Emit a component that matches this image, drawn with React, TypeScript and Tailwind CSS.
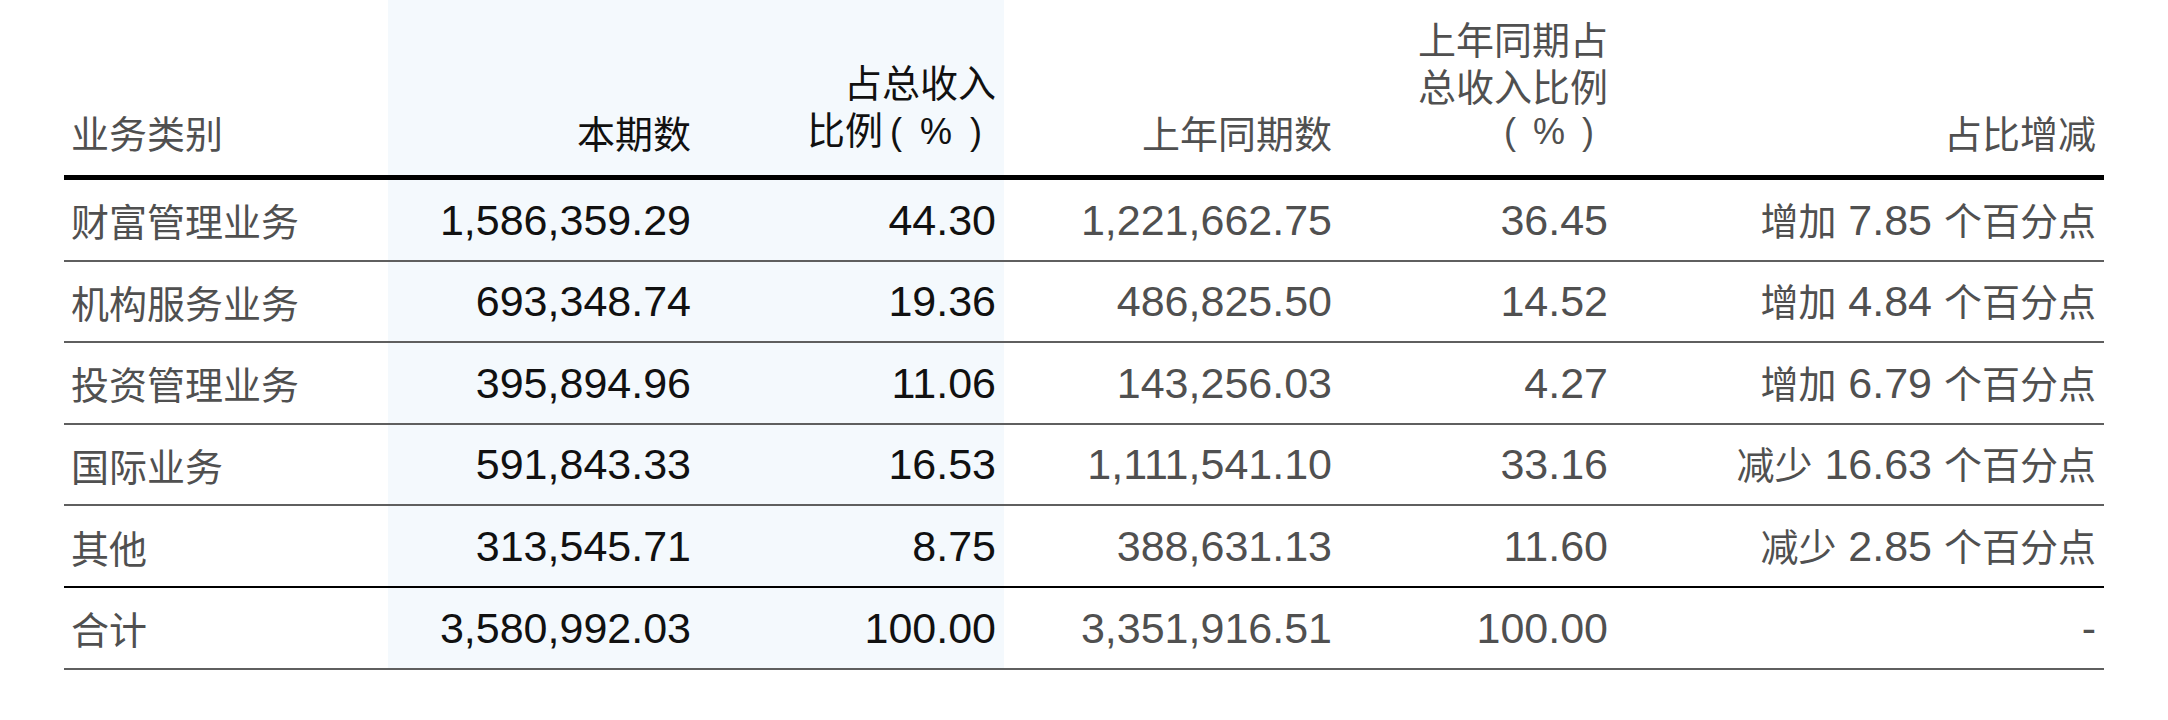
import React from "react";

const CJK = "font-['Noto_Sans_CJK_SC',sans-serif] text-[38px]";
const NUM = "font-['Liberation_Sans','Noto_Sans_CJK_SC',sans-serif] text-[43px]";
const GRAY = "text-[#505050]";
const DARK = "text-[#111111]";
const BAND = "bg-[#f4f9fd]";

type Row = {
  name: string;
  cur: string;
  curPct: string;
  prev: string;
  prevPct: string;
  change: [string, string] | null;
};

const rows: Row[] = [
  { name: "财富管理业务", cur: "1,586,359.29", curPct: "44.30", prev: "1,221,662.75", prevPct: "36.45", change: ["增加", "7.85"] },
  { name: "机构服务业务", cur: "693,348.74", curPct: "19.36", prev: "486,825.50", prevPct: "14.52", change: ["增加", "4.84"] },
  { name: "投资管理业务", cur: "395,894.96", curPct: "11.06", prev: "143,256.03", prevPct: "4.27", change: ["增加", "6.79"] },
  { name: "国际业务", cur: "591,843.33", curPct: "16.53", prev: "1,111,541.10", prevPct: "33.16", change: ["减少", "16.63"] },
  { name: "其他", cur: "313,545.71", curPct: "8.75", prev: "388,631.13", prevPct: "11.60", change: ["减少", "2.85"] },
  { name: "合计", cur: "3,580,992.03", curPct: "100.00", prev: "3,351,916.51", prevPct: "100.00", change: null },
];

function HeadCell({ children, band, dark, left }: { children: React.ReactNode; band?: boolean; dark?: boolean; left?: boolean }) {
  return (
    <div
      className={`h-[180px] border-b-[5px] border-black flex flex-col justify-end pb-[20px] ${left ? "items-start pl-[7px]" : "items-end pr-[8px] text-right"} ${band ? BAND : ""} ${dark ? DARK : GRAY} ${CJK} leading-[47px]`}
    >
      {children}
    </div>
  );
}

function BodyCell({ children, band, dark, left, borderCls }: { children: React.ReactNode; band?: boolean; dark?: boolean; left?: boolean; borderCls: string }) {
  return (
    <div
      className={`h-[81.6px] border-b-2 ${borderCls} flex items-center ${left ? "justify-start pl-[7px]" : "justify-end pr-[8px]"} ${band ? BAND : ""} ${dark ? DARK : GRAY} whitespace-nowrap`}
    >
      {children}
    </div>
  );
}

function Pct({ cls }: { cls: string }) {
  return (
    <span className={`inline-flex justify-between ${cls} font-['Liberation_Sans',sans-serif] text-[36px]`}>
      <span>(</span>
      <span>%</span>
      <span>)</span>
    </span>
  );
}

export default function App() {
  return (
    <div className="w-[2168px] h-[720px] bg-white pl-[64px]">
      <div className="grid grid-cols-[324px_311px_305px_336px_276px_488px] w-[2040px]">
        <HeadCell left>业务类别</HeadCell>
        <HeadCell band dark>本期数</HeadCell>
        <HeadCell band dark>
          <div>占总收入</div>
          <div className="flex items-baseline">
            <span>比例</span>
            <Pct cls="w-[92px] mr-[14px] ml-[7px]" />
          </div>
        </HeadCell>
        <HeadCell>上年同期数</HeadCell>
        <HeadCell>
          <div>上年同期占</div>
          <div>总收入比例</div>
          <div className="flex items-baseline">
            <Pct cls="w-[90px] mr-[14px]" />
          </div>
        </HeadCell>
        <HeadCell>占比增减</HeadCell>

        {rows.map((r, i) => {
          const borderCls = i === 4 ? "border-black" : "border-[#5f5f5f]";
          return (
            <React.Fragment key={r.name}>
              <BodyCell left borderCls={borderCls}>
                <span className={CJK}>{r.name}</span>
              </BodyCell>
              <BodyCell band dark borderCls={borderCls}>
                <span className={NUM}>{r.cur}</span>
              </BodyCell>
              <BodyCell band dark borderCls={borderCls}>
                <span className={NUM}>{r.curPct}</span>
              </BodyCell>
              <BodyCell borderCls={borderCls}>
                <span className={NUM}>{r.prev}</span>
              </BodyCell>
              <BodyCell borderCls={borderCls}>
                <span className={NUM}>{r.prevPct}</span>
              </BodyCell>
              <BodyCell borderCls={borderCls}>
                {r.change ? (
                  <span className="whitespace-pre">
                    <span className={CJK}>{r.change[0]}</span>
                    <span className={NUM}>{` ${r.change[1]} `}</span>
                    <span className={CJK}>个百分点</span>
                  </span>
                ) : (
                  <span className={NUM}>-</span>
                )}
              </BodyCell>
            </React.Fragment>
          );
        })}
      </div>
    </div>
  );
}
